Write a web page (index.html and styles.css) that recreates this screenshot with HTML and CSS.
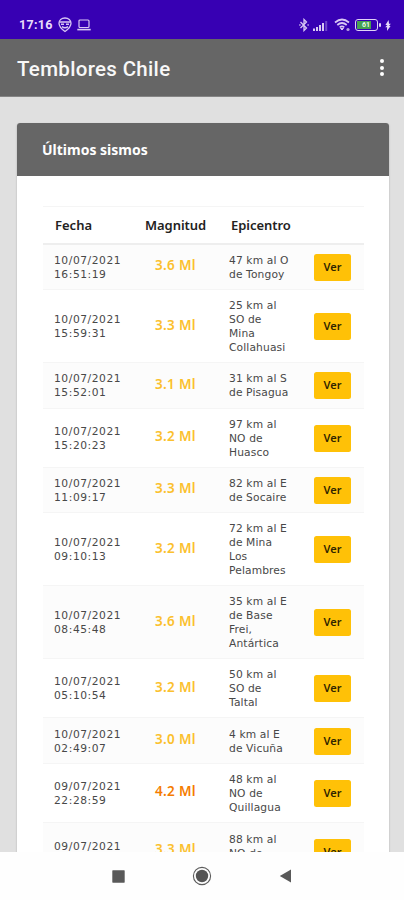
FILE: index.html
```html
<!DOCTYPE html>
<html lang="es">
<head>
<meta charset="utf-8">
<title>Temblores Chile</title>
<link rel="stylesheet" href="styles.css">
</head>
<body>
<div class="phone">
  <div class="status">
    <span class="time">17:16</span>
    <svg class="ic-face" width="14" height="16" viewBox="0 0 14 16" fill="none" stroke="#d9c8f4" stroke-width="1.3"><path d="M7 1C3.500 1 1 3.200 1 6.300c0 3.300 2.400 5.700 6 8.200 3.600-2.500 6-4.900 6-8.200C13 3.200 10.500 1 7 1z"/><path d="M1.500 5h11M3 7.300h3M8 7.300h3M4 9.600q3 2.200 6 0" stroke-width="1.500"/></svg>
    <svg class="ic-laptop" width="14" height="12" viewBox="0 0 14 12" fill="none" stroke="#d9c8f4" stroke-width="1.200"><rect x="2" y="1" width="10" height="7.500" rx="1"/><path d="M.3 10.600h13.400" stroke-width="1.600"/></svg>
    <span class="grow"></span>
    <svg class="ic-bt" width="10" height="14" viewBox="0 0 10 14" fill="none" stroke="#d9c8f4" stroke-width="1.300"><path d="M1.500 4l6 6L5 12.500v-11L7.500 4l-6 6"/><path d="M.3 7h1.200M8.500 7h1.200"/></svg>
    <svg class="ic-sig" width="15" height="12" viewBox="0 0 15 12" fill="#d9c8f4"><path d="M0 9.500h2V12H0zM3 8h2v4H3zM6 6h2v6H6zM9 4h2v8H9z"/><path d="M12.200 2h2v10h-2z" opacity=".35"/></svg>
    <svg class="ic-wifi" width="17" height="14" viewBox="0 0 17 14" fill="none" stroke="#d9c8f4" stroke-width="1.700"><path d="M1 4.500q7-6 14 0M3.300 7q4.700-4 9.400 0M5.700 9.300q2.300-2 4.600 0"/><path d="M6.500 10.500L8 12l1.500-1.500z" fill="#d9c8f4" stroke-width="1"/><circle cx="14" cy="11.500" r="1.600" fill="#b49be0" stroke="none"/></svg>
    <span class="battery"><span class="charge">61</span></span>
    <svg class="ic-bolt" width="6" height="11" viewBox="0 0 6 11" fill="#e6dafa"><path d="M3.600 0L.4 5h2L.2 7.200h1.900L2 11l3.600-5H4l1.800-2.200H4z"/></svg>
  </div>
  <div class="appbar">
    <span class="title">Temblores Chile</span>
    <span class="more"><i></i><i></i><i></i></span>
  </div>
  <main class="content">
    <section class="card">
      <h1 class="card-head"><span>Últimos sismos</span></h1>
      <div class="table">
        <div class="row head"><span class="h-date">Fecha</span><span class="h-mag">Magnitud</span><span class="h-epi">Epicentro</span></div>
        <div class="row l2 odd"><div class="date">10/07/2021<br>16:51:19</div><div class="mag">3.6 Ml</div><div class="epi">47 km al O<br>de Tongoy</div><button class="btn">Ver</button></div>
        <div class="row l4"><div class="date">10/07/2021<br>15:59:31</div><div class="mag">3.3 Ml</div><div class="epi">25 km al<br>SO de<br>Mina<br>Collahuasi</div><button class="btn">Ver</button></div>
        <div class="row l2 odd"><div class="date">10/07/2021<br>15:52:01</div><div class="mag">3.1 Ml</div><div class="epi">31 km al S<br>de Pisagua</div><button class="btn">Ver</button></div>
        <div class="row l3"><div class="date">10/07/2021<br>15:20:23</div><div class="mag">3.2 Ml</div><div class="epi">97 km al<br>NO de<br>Huasco</div><button class="btn">Ver</button></div>
        <div class="row l2 odd"><div class="date">10/07/2021<br>11:09:17</div><div class="mag">3.3 Ml</div><div class="epi">82 km al E<br>de Socaire</div><button class="btn">Ver</button></div>
        <div class="row l4"><div class="date">10/07/2021<br>09:10:13</div><div class="mag">3.2 Ml</div><div class="epi">72 km al E<br>de Mina<br>Los<br>Pelambres</div><button class="btn">Ver</button></div>
        <div class="row l4 odd"><div class="date">10/07/2021<br>08:45:48</div><div class="mag">3.6 Ml</div><div class="epi">35 km al E<br>de Base<br>Frei,<br>Antártica</div><button class="btn">Ver</button></div>
        <div class="row l3"><div class="date">10/07/2021<br>05:10:54</div><div class="mag">3.2 Ml</div><div class="epi">50 km al<br>SO de<br>Taltal</div><button class="btn">Ver</button></div>
        <div class="row l2 odd"><div class="date">10/07/2021<br>02:49:07</div><div class="mag">3.0 Ml</div><div class="epi">4 km al E<br>de Vicuña</div><button class="btn">Ver</button></div>
        <div class="row l3"><div class="date">09/07/2021<br>22:28:59</div><div class="mag strong">4.2 Ml</div><div class="epi">48 km al<br>NO de<br>Quillagua</div><button class="btn">Ver</button></div>
        <div class="row l3 odd"><div class="date">09/07/2021</div><div class="mag">3.3 Ml</div><div class="epi">88 km al<br>NO de</div><button class="btn">Ver</button></div>
      </div>
    </section>
  </main>
  <nav class="nav">
    <svg width="13" height="13" viewBox="0 0 13 13"><rect x=".3" y=".3" width="12.400" height="12.400" rx=".6" fill="#595959"/></svg>
    <svg width="20" height="20" viewBox="0 0 20 20"><circle cx="10" cy="10" r="8.600" fill="none" stroke="#5c5c5c" stroke-width="1.100"/><circle cx="10" cy="10" r="6.200" fill="#555"/></svg>
    <svg width="13" height="14" viewBox="0 0 13 14"><path d="M.8 7L12 .6v12.800z" fill="#595959"/></svg>
  </nav>
</div>
</body>
</html>
```
FILE: styles.css
```css
* { box-sizing: border-box; }
body { margin: 0; background: #e0e0e0; }
.phone {
  width: 404px; height: 900px; overflow: hidden;
  display: flex; flex-direction: column;
  font-family: "DejaVu Sans", sans-serif;
}
.status {
  flex: 0 0 39px; background: #3700b3; color: #eadcfb;
  display: flex; align-items: center; padding: 11px 13px 0 19px;
}
.time { font: 700 12.5px/16px Roboto, sans-serif; letter-spacing: .3px; width: 39px; white-space: nowrap; }
.ic-laptop { margin-left: 5px; }
.grow { flex: 1; }
.ic-sig { margin-left: 4px; }
.ic-wifi { margin-left: 6px; }
.battery {
  position: relative; width: 23px; height: 12px; margin: 0 7px 0 4px;
  border: 1.5px solid #e0d2f7; border-radius: 3px; padding: 1px; display: flex;
}
.battery::after {
  content: ""; position: absolute; right: -4px; top: 2.5px;
  width: 2px; height: 4px; background: #e0d2f7; border-radius: 1px;
}
.charge {
  width: 14px; background: #46a052; color: #e9fbe9;
  font: 700 7px/8px Roboto, sans-serif; text-align: right; padding-right: 1px;
}
.appbar {
  flex: 0 0 58px; background: #666; border-bottom: 1px solid #858585;
  display: flex; align-items: center; justify-content: space-between; padding: 0 20px 0 17px;
}
.title { font: 500 20.5px/28px Roboto, sans-serif; color: #f8f8f8; letter-spacing: .32px; white-space: nowrap; padding-top: 2px; }
.more { display: flex; flex-direction: column; gap: 2.5px; }
.more i { width: 4px; height: 4px; border-radius: 50%; background: #fff; }
.content { flex: 1; min-height: 0; overflow: hidden; padding: 26px 15px 0 17px; background: #e0e0e0; }
.card { background: #fff; border-radius: 3px; overflow: hidden; height: 770px; box-shadow: 0 1px 2px rgba(0,0,0,.25); }
.card-head {
  margin: 0; height: 53px; background: #666; color: #fff; padding: 0 25px;
  display: flex; align-items: center;
  font: 700 14px/20px "Noto Sans", sans-serif;
}
.table { margin: 30px 25px 0 26px; }
.row {
  display: grid; grid-template-columns: 90px 86px 84px 37px;
  padding-left: 11px; align-items: center; border-bottom: 1px solid #f5f5f5;
}
.head {
  height: 38.5px; border-top: 1px solid #f5f5f5; border-bottom: 2px solid #eee;
  font: 600 13px/18px "Noto Sans", sans-serif; color: #222;
}
.h-date { padding-left: 1px; }
.h-mag { padding-left: 1px; letter-spacing: -.05px; }
.h-epi { padding-left: 1px; letter-spacing: -.05px; }
.l2 { height: 45.5px; }
.l3 { height: 59.2px; }
.l4 { height: 73px; }
.odd { background: #fcfcfc; }
.date, .epi { font-size: 10.7px; line-height: 13.9px; color: #484848; white-space: nowrap; padding-top: 2px; }
.date { letter-spacing: .56px; }
.epi { margin-left: -1px; letter-spacing: .12px; }
.mag { color: #fbc02d; font: 600 13.5px/18px "Noto Sans", sans-serif; letter-spacing: .3px; padding-left: 11px; padding-bottom: 3px; white-space: nowrap; }
.strong { color: #f57c00; }
.btn {
  width: 37px; height: 27px; border: 0; border-radius: 2.5px; padding: 0 0 1px; margin-top: 1px;
  background: #ffc107; color: #302500; font: 600 11px/16px "Noto Sans", sans-serif;
}
.row:last-child { align-items: start; padding-top: 15px; }
.row:last-child .epi { margin-top: -7px; }
.row:last-child .mag { margin-top: 2px; }
.nav {
  flex: 0 0 48px; background: #fefefe;
  display: grid; grid-template-columns: 13px 20px 13px; column-gap: 67px;
  align-items: center; justify-content: start; padding-left: 112px;
}
```
